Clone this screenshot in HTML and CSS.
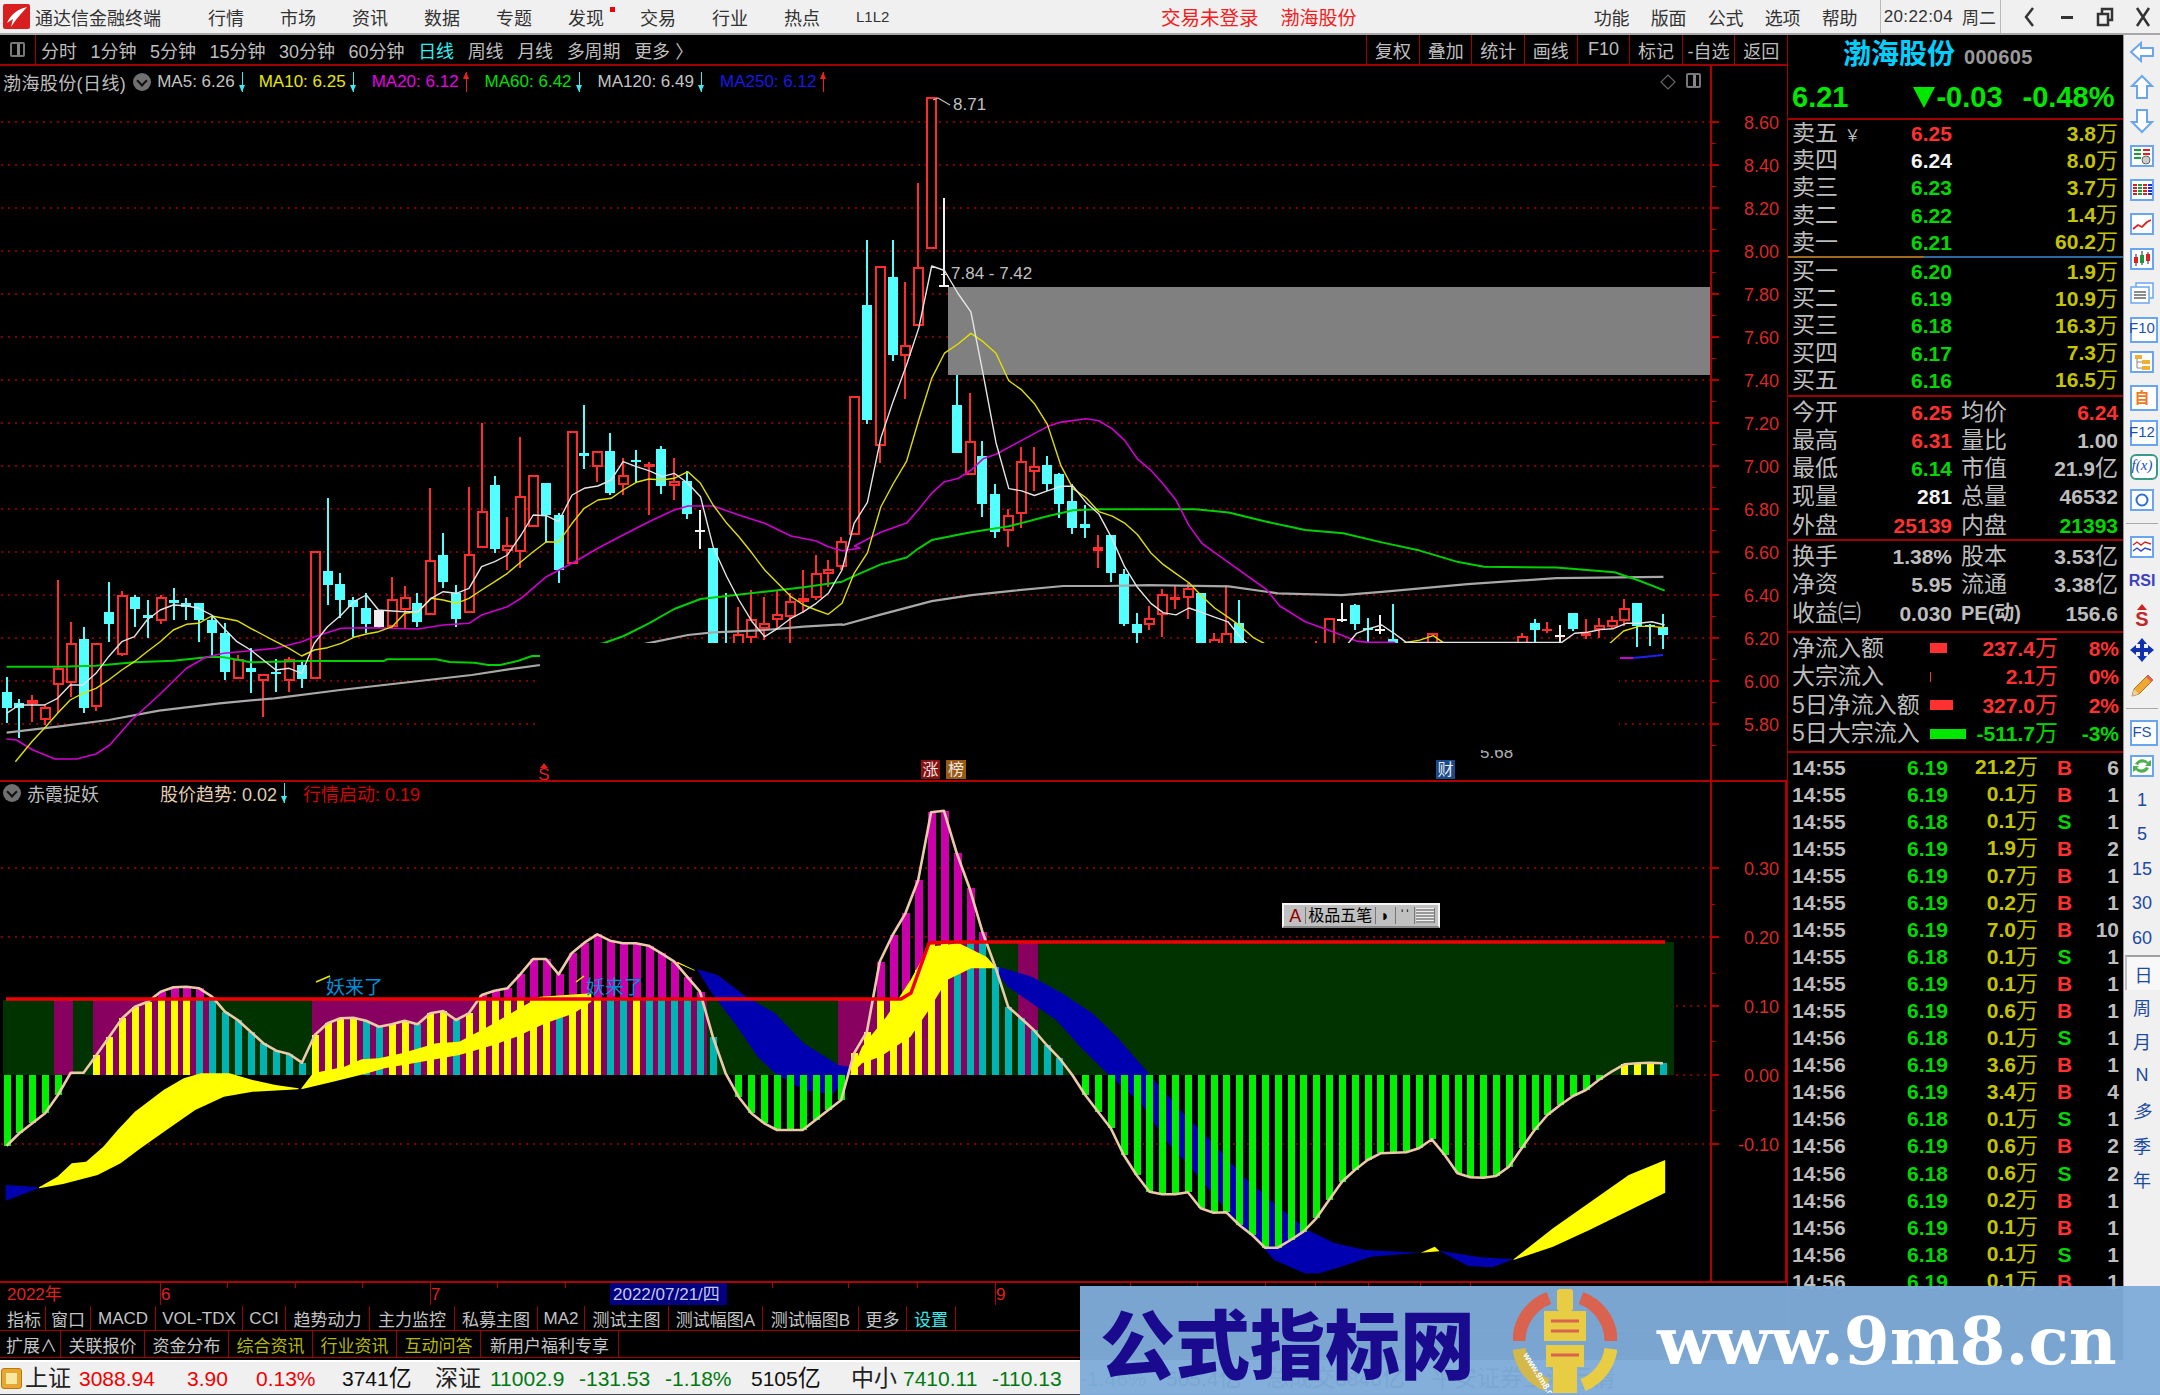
FILE: index.html
```html
<!DOCTYPE html>
<html lang="zh-CN">
<head>
    <meta charset="UTF-8">
    <title>通达信金融终端</title>
    <link rel="stylesheet" href="styles.css">
</head>
<body>
<div class="app">

    <!-- 标题栏 -->
    <header class="titlebar">
        <svg class="app-logo" viewBox="0 0 27 25"><rect width="27" height="25" rx="2" fill="#d81e1e"/><path d="M24 3 C15 5 8 10 4 19 L10 15 L8 23 C13 15 18 10 24 3Z" fill="#fff"/></svg>
        <span class="app-name">通达信金融终端</span>
        <nav class="menu">
            <span>行情</span><span>市场</span><span>资讯</span><span>数据</span><span>专题</span>
            <span class="has-dot">发现</span><span>交易</span><span>行业</span><span>热点</span><span class="latin">L1L2</span>
        </nav>
        <span class="login">交易未登录</span>
        <span class="login-stock">渤海股份</span>
        <nav class="func-menu"><span>功能</span><span>版面</span><span>公式</span><span>选项</span><span>帮助</span></nav>
        <div class="clock"><span class="clock-time">20:22:04</span><span>周二</span></div>
        <div class="win-btns">
            <svg viewBox="0 0 20 24"><path d="M14 3 L7 12 L14 21" fill="none" stroke="#333" stroke-width="2.5"/></svg>
            <svg viewBox="0 0 20 24"><rect x="4" y="11" width="12" height="3" fill="#333"/></svg>
            <svg viewBox="0 0 20 24"><rect x="7" y="4" width="10" height="11" fill="none" stroke="#333" stroke-width="2.5"/><rect x="3" y="9" width="10" height="11" fill="#f0f0f0" stroke="#333" stroke-width="2.5"/></svg>
            <svg viewBox="0 0 20 24"><path d="M4 3 L16 21 M16 3 L4 21" stroke="#333" stroke-width="2.5"/></svg>
        </div>
    </header>

    <div class="workspace">
        <!-- 左边: K线图 -->
        <main class="left">
            <div class="toolbar">
                <div class="toolbar-icon"><span></span></div>
                <div class="periods">
                    <span>分时</span><span>1分钟</span><span>5分钟</span><span>15分钟</span><span>30分钟</span><span>60分钟</span>
                    <span class="cyan">日线</span><span>周线</span><span>月线</span><span>多周期</span><span>更多 〉</span>
                </div>
                <div class="tools">
                    <span>复权</span><span>叠加</span><span>统计</span><span>画线</span><span>F10</span><span>标记</span><span>-自选</span><span>返回</span>
                </div>
            </div>

            <div class="chart">
                <svg id="chart" class="chart-svg" viewBox="0 66 1787 1240" width="1787" height="1240"></svg>

                <div class="legend legend-main">
                    <span class="legend-name">渤海股份(日线)</span>
                    <span class="chevron"></span>
                    <span class="ma c-gray">MA5: 6.26<b class="arrow down"></b></span>
                    <span class="ma c-yellow">MA10: 6.25<b class="arrow down"></b></span>
                    <span class="ma c-magenta">MA20: 6.12<b class="arrow up"></b></span>
                    <span class="ma c-green">MA60: 6.42<b class="arrow down"></b></span>
                    <span class="ma c-gray">MA120: 6.49<b class="arrow down"></b></span>
                    <span class="ma c-blue">MA250: 6.12<b class="arrow up"></b></span>
                </div>
                <div class="chart-corner">
                    <svg viewBox="0 0 16 16" width="16" height="16"><path d="M8 1 L15 8 L8 15 L1 8Z" fill="none" stroke="#666" stroke-width="1.2"/></svg>
                    <div class="mini-box"><span></span></div>
                </div>

                <div class="legend legend-sub">
                    <span class="chevron"></span>
                    <span class="legend-name sub-name">赤霞捉妖</span>
                    <span class="ma c-tan">股价趋势: 0.02<b class="arrow down"></b></span>
                    <span class="ma c-red">行情启动: 0.19</span>
                </div>

                <div class="ime">
                    <span class="ime-a">A</span><span class="ime-name">极品五笔</span><span class="ime-btn">◗</span><span class="ime-btn">ˈˈ</span><span class="ime-kbd"></span>
                </div>
            </div>

            <div class="tabs tabs-one">
                <span>指标</span><span>窗口</span><span>MACD</span><span>VOL-TDX</span><span>CCI</span><span>趋势动力</span><span>主力监控</span><span>私募主图</span><span>MA2</span><span>测试主图</span><span>测试幅图A</span><span>测试幅图B</span><span>更多</span><span class="cyan">设置</span>
            </div>
            <div class="tabs tabs-two">
                <span>扩展∧</span><span>关联报价</span><span>资金分布</span><span class="olive">综合资讯</span><span class="olive">行业资讯</span><span class="olive">互动问答</span><span>新用户福利专享</span>
            </div>
        </main>

        <!-- 右边: 盘口 -->
        <aside class="quote">
            <div class="quote-head">
                <div class="stock-line"><span class="stock-name">渤海股份</span><span class="stock-code">000605</span></div>
                <div class="price-line"><span>6.21</span><span class="price-change"><i class="tri"></i>-0.03</span><span>-0.48%</span></div>
            </div>

            <section class="book book-sell">
                <div class="book-row"><span class="lbl">卖五 <small>￥</small></span><span class="red">6.25</span><span class="vol">3.8<i>万</i></span></div>
                <div class="book-row"><span class="lbl">卖四</span><span class="white">6.24</span><span class="vol">8.0<i>万</i></span></div>
                <div class="book-row"><span class="lbl">卖三</span><span class="green">6.23</span><span class="vol">3.7<i>万</i></span></div>
                <div class="book-row"><span class="lbl">卖二</span><span class="green">6.22</span><span class="vol">1.4<i>万</i></span></div>
                <div class="book-row"><span class="lbl">卖一</span><span class="green">6.21</span><span class="vol">60.2<i>万</i></span></div>
            </section>
            <div class="book-split"></div>
            <section class="book book-buy">
                <div class="book-row"><span class="lbl">买一</span><span class="green">6.20</span><span class="vol">1.9<i>万</i></span></div>
                <div class="book-row"><span class="lbl">买二</span><span class="green">6.19</span><span class="vol">10.9<i>万</i></span></div>
                <div class="book-row"><span class="lbl">买三</span><span class="green">6.18</span><span class="vol">16.3<i>万</i></span></div>
                <div class="book-row"><span class="lbl">买四</span><span class="green">6.17</span><span class="vol">7.3<i>万</i></span></div>
                <div class="book-row"><span class="lbl">买五</span><span class="green">6.16</span><span class="vol">16.5<i>万</i></span></div>
            </section>

            <section class="info">
                <div class="info-row"><span class="lbl">今开</span><span class="red">6.25</span><span class="lbl2">均价</span><span class="red">6.24</span></div>
                <div class="info-row"><span class="lbl">最高</span><span class="red">6.31</span><span class="lbl2">量比</span><span class="gray">1.00</span></div>
                <div class="info-row"><span class="lbl">最低</span><span class="green">6.14</span><span class="lbl2">市值</span><span class="gray">21.9<i>亿</i></span></div>
                <div class="info-row"><span class="lbl">现量</span><span class="white">281</span><span class="lbl2">总量</span><span class="gray">46532</span></div>
                <div class="info-row"><span class="lbl">外盘</span><span class="red">25139</span><span class="lbl2">内盘</span><span class="green">21393</span></div>
            </section>
            <section class="info info-base">
                <div class="info-row"><span class="lbl">换手</span><span class="gray">1.38%</span><span class="lbl2">股本</span><span class="gray">3.53<i>亿</i></span></div>
                <div class="info-row"><span class="lbl">净资</span><span class="gray">5.95</span><span class="lbl2">流通</span><span class="gray">3.38<i>亿</i></span></div>
                <div class="info-row"><span class="lbl">收益㈢</span><span class="gray">0.030</span><span class="lbl2 pe">PE(动)</span><span class="gray">156.6</span></div>
            </section>

            <section class="flow">
                <div class="flow-row"><span class="lbl">净流入额</span><b class="bar bg-red" style="width:17px"></b><span class="red">237.4<i>万</i></span><span class="red">8%</span></div>
                <div class="flow-row"><span class="lbl">大宗流入</span><b class="bar bg-red" style="width:1px"></b><span class="red">2.1<i>万</i></span><span class="red">0%</span></div>
                <div class="flow-row"><span class="lbl">5日净流入额</span><b class="bar bg-red" style="width:23px"></b><span class="red">327.0<i>万</i></span><span class="red">2%</span></div>
                <div class="flow-row"><span class="lbl">5日大宗流入</span><b class="bar bg-green" style="width:36px"></b><span class="green">-511.7<i>万</i></span><span class="green">-3%</span></div>
            </section>

            <section class="ticks">
                <div class="tick"><span>14:55</span><span class="green">6.19</span><span class="vol">21.2<i>万</i></span><span class="red">B</span><span>6</span></div>
                <div class="tick"><span>14:55</span><span class="green">6.19</span><span class="vol">0.1<i>万</i></span><span class="red">B</span><span>1</span></div>
                <div class="tick"><span>14:55</span><span class="green">6.18</span><span class="vol">0.1<i>万</i></span><span class="green">S</span><span>1</span></div>
                <div class="tick"><span>14:55</span><span class="green">6.19</span><span class="vol">1.9<i>万</i></span><span class="red">B</span><span>2</span></div>
                <div class="tick"><span>14:55</span><span class="green">6.19</span><span class="vol">0.7<i>万</i></span><span class="red">B</span><span>1</span></div>
                <div class="tick"><span>14:55</span><span class="green">6.19</span><span class="vol">0.2<i>万</i></span><span class="red">B</span><span>1</span></div>
                <div class="tick"><span>14:55</span><span class="green">6.19</span><span class="vol">7.0<i>万</i></span><span class="red">B</span><span>10</span></div>
                <div class="tick"><span>14:55</span><span class="green">6.18</span><span class="vol">0.1<i>万</i></span><span class="green">S</span><span>1</span></div>
                <div class="tick"><span>14:55</span><span class="green">6.19</span><span class="vol">0.1<i>万</i></span><span class="red">B</span><span>1</span></div>
                <div class="tick"><span>14:55</span><span class="green">6.19</span><span class="vol">0.6<i>万</i></span><span class="red">B</span><span>1</span></div>
                <div class="tick"><span>14:56</span><span class="green">6.18</span><span class="vol">0.1<i>万</i></span><span class="green">S</span><span>1</span></div>
                <div class="tick"><span>14:56</span><span class="green">6.19</span><span class="vol">3.6<i>万</i></span><span class="red">B</span><span>1</span></div>
                <div class="tick"><span>14:56</span><span class="green">6.19</span><span class="vol">3.4<i>万</i></span><span class="red">B</span><span>4</span></div>
                <div class="tick"><span>14:56</span><span class="green">6.18</span><span class="vol">0.1<i>万</i></span><span class="green">S</span><span>1</span></div>
                <div class="tick"><span>14:56</span><span class="green">6.19</span><span class="vol">0.6<i>万</i></span><span class="red">B</span><span>2</span></div>
                <div class="tick"><span>14:56</span><span class="green">6.18</span><span class="vol">0.6<i>万</i></span><span class="green">S</span><span>2</span></div>
                <div class="tick"><span>14:56</span><span class="green">6.19</span><span class="vol">0.2<i>万</i></span><span class="red">B</span><span>1</span></div>
                <div class="tick"><span>14:56</span><span class="green">6.19</span><span class="vol">0.1<i>万</i></span><span class="red">B</span><span>1</span></div>
                <div class="tick"><span>14:56</span><span class="green">6.18</span><span class="vol">0.1<i>万</i></span><span class="green">S</span><span>1</span></div>
                <div class="tick"><span>14:56</span><span class="green">6.19</span><span class="vol">0.1<i>万</i></span><span class="red">B</span><span>1</span></div>
            </section>
        </aside>

        <!-- 侧边工具条 -->
        <nav class="sidebar">
            <div class="side"><svg viewBox="0 0 26 26"><path d="M2 13 L12 4 V9 H24 V17 H12 V22Z" fill="#fff" stroke="#6aa6f0" stroke-width="2"/></svg></div>
            <div class="side"><svg viewBox="0 0 26 26"><path d="M13 2 L23 12 H18 V24 H8 V12 H3Z" fill="#fff" stroke="#6aa6f0" stroke-width="2"/></svg></div>
            <div class="side"><svg viewBox="0 0 26 26"><path d="M13 24 L23 14 H18 V2 H8 V14 H3Z" fill="#fff" stroke="#6aa6f0" stroke-width="2"/></svg></div>
            <div class="side"><svg viewBox="0 0 26 26"><rect x="2" y="3" width="22" height="20" fill="#fff" stroke="#6aa6f0" stroke-width="2"/><path d="M5 7 H12 M5 11 H12 M5 15 H12" stroke="#1a9a3a" stroke-width="2"/><path d="M14 7 H21 M14 11 H21" stroke="#d82020" stroke-width="2"/><circle cx="17" cy="17" r="4" fill="#ccc" stroke="#666"/></svg></div>
            <div class="side"><svg viewBox="0 0 26 26"><rect x="2" y="3" width="22" height="20" fill="#fff" stroke="#6aa6f0" stroke-width="2"/><path d="M6 7 V19" stroke="#d82020" stroke-width="4" stroke-dasharray="2 1"/><path d="M11 7 V19" stroke="#1a9a3a" stroke-width="4" stroke-dasharray="2 1"/><path d="M16 7 V19" stroke="#d82020" stroke-width="4" stroke-dasharray="2 1"/><path d="M21 7 V19" stroke="#2030d0" stroke-width="4" stroke-dasharray="2 1"/></svg></div>
            <div class="side"><svg viewBox="0 0 26 26"><rect x="2" y="3" width="22" height="20" fill="#fff" stroke="#6aa6f0" stroke-width="2"/><path d="M4 18 L9 14 L13 16 L18 11 L22 9" fill="none" stroke="#e02020" stroke-width="1.8"/></svg></div>
            <div class="side"><svg viewBox="0 0 26 26"><rect x="2" y="3" width="22" height="20" fill="#fff" stroke="#6aa6f0" stroke-width="2"/><path d="M7 8 V20 M13 5 V19 M19 6 V18" stroke="#222"/><rect x="5" y="11" width="4" height="6" fill="#e02020"/><rect x="11" y="9" width="4" height="8" fill="#1a9a3a"/><rect x="17" y="8" width="4" height="7" fill="#e02020"/></svg></div>
            <div class="side"><svg viewBox="0 0 26 26"><rect x="7" y="3" width="17" height="15" fill="#fff" stroke="#6aa6f0" stroke-width="1.5"/><rect x="2" y="7" width="18" height="16" fill="#fff" stroke="#6aa6f0" stroke-width="1.5"/><path d="M5 12 H17 M5 15 H17 M5 18 H17" stroke="#666" stroke-width="1.6"/></svg></div>
            <div class="side boxed blue-txt">F10</div>
            <div class="side"><svg viewBox="0 0 26 26"><rect x="2" y="3" width="22" height="20" fill="#fff" stroke="#6aa6f0" stroke-width="2"/><rect x="6" y="6" width="7" height="4" fill="#f0b030"/><rect x="13" y="11" width="8" height="4" fill="#f0b030"/><rect x="13" y="17" width="8" height="4" fill="#f0b030"/><path d="M8 10 V19 H13 M8 13 H13" fill="none" stroke="#888"/></svg></div>
            <div class="side boxed orange-txt">自</div>
            <div class="side boxed blue-txt">F12</div>
            <div class="side boxed round blue-txt fx">f(x)</div>
            <div class="side"><svg viewBox="0 0 26 26"><rect x="2" y="3" width="22" height="20" fill="#fff" stroke="#6aa6f0" stroke-width="2"/><circle cx="13" cy="13" r="5.5" fill="none" stroke="#2a70d0" stroke-width="2"/></svg></div>
            <div class="side-sep"></div>
            <div class="side"><svg viewBox="0 0 26 26"><rect x="2" y="3" width="22" height="20" fill="#fff" stroke="#6aa6f0" stroke-width="2"/><path d="M4 11 L8 8 L12 11 L16 8 L22 10" fill="none" stroke="#e02020" stroke-width="1.4"/><path d="M4 17 L8 14 L12 17 L16 14 L22 16" fill="none" stroke="#3040d0" stroke-width="1.4"/></svg></div>
            <div class="side rsi">RSI</div>
            <div class="side"><svg viewBox="0 0 26 26"><path d="M13 1 L18 7 H8Z" fill="#d02020"/><text x="13" y="23" text-anchor="middle" class="side-s">S</text></svg></div>
            <div class="side"><svg viewBox="0 0 26 26"><path d="M13 1 L18 7 H15 V11 H19 V8 L25 13 L19 18 V15 H15 V19 H18 L13 25 L8 19 H11 V15 H7 V18 L1 13 L7 8 V11 H11 V7 H8Z" fill="#1030b0"/></svg></div>
            <div class="side"><svg viewBox="0 0 26 26"><path d="M3 24 L5 17 L19 3 L24 8 L10 22Z" fill="#f0a830" stroke="#a07020"/><path d="M19 3 L24 8 L22 10 L17 5Z" fill="#e06060"/><path d="M3 24 L5 17 L10 22Z" fill="#e8d0a0"/></svg></div>
            <div class="side-sep"></div>
            <div class="side boxed blue-txt">FS</div>
            <div class="side"><svg viewBox="0 0 26 26"><rect x="2" y="3" width="22" height="20" fill="#fff" stroke="#6aa6f0" stroke-width="2"/><path d="M6 11 C9 5 16 5 19 9 L22 7 V13 H16 L18 11 C15 9 11 9 9 12Z" fill="#50b050"/><path d="M20 15 C17 21 10 21 7 17 L4 19 V13 H10 L8 15 C11 17 15 17 17 14Z" fill="#50b050"/></svg></div>
            <div class="side num">1</div>
            <div class="side num">5</div>
            <div class="side num">15</div>
            <div class="side num">30</div>
            <div class="side num">60</div>
            <div class="side num active">日</div>
            <div class="side num">周</div>
            <div class="side num">月</div>
            <div class="side num">N</div>
            <div class="side num ital">多</div>
            <div class="side num">季</div>
            <div class="side num">年</div>
        </nav>
    </div>

    <!-- 状态栏 -->
    <footer class="status">
        <span class="status-icon"><b></b></span>
        <span class="idx">上证</span><span class="t-red">3088.94</span><span class="t-red">3.90</span><span class="t-red">0.13%</span><span>3741<i>亿</i></span>
        <span class="idx">深证</span><span class="t-green">11002.9</span><span class="t-green">-131.53</span><span class="t-green">-1.18%</span><span>5105<i>亿</i></span>
        <span class="idx">中小</span><span class="t-green">7410.11</span><span class="t-green">-110.13</span><span class="t-green">-1.46%</span><span>505.4<i>亿</i></span>
        <span class="idx">总成交</span><span>8846<i>亿</i></span><span class="idx">平安证券上海行情</span>
    </footer>

    <!-- 水印 -->
    <div class="watermark">
        <span class="wm-title">公式指标网</span>
        <svg class="wm-logo" viewBox="0 0 104 104">
            <path d="M6 52 A46 46 0 0 1 36 9" fill="none" stroke="#d9634e" stroke-width="13"/>
            <path d="M68 9 A46 46 0 0 1 98 52" fill="none" stroke="#d9634e" stroke-width="13"/>
            <path d="M98 60 A46 46 0 0 1 70 96" fill="none" stroke="#e8cc44" stroke-width="13"/>
            <path d="M6 60 A46 46 0 0 0 34 96" fill="none" stroke="#d4b84a" stroke-width="13"/>
            <rect x="44" y="0" width="16" height="22" rx="3" fill="#e8cc44"/>
            <rect x="31" y="22" width="42" height="30" fill="#e8cc44"/>
            <rect x="33" y="56" width="38" height="22" fill="#e8cc44"/>
            <rect x="40" y="78" width="24" height="26" fill="#e8cc44"/>
            <path d="M38 32 H66 M38 42 H66 M38 66 H66" stroke="#d9634e" stroke-width="3"/>
            <text class="wm-mini" transform="translate(10 66) rotate(58)">www.9m8.cn</text>
        </svg>
        <span class="wm-url">www.9m8.cn</span>
    </div>
</div>
<script src="chart.js"></script>
</body>
</html>
```

FILE: styles.css
```css
* {
    box-sizing: border-box;
}

body {
    margin: 0;
    background-color: #000;
    font-family: "Liberation Sans", "Noto Sans CJK SC", sans-serif;
}

i {
    font-style: normal;
}

.app {
    position: relative;
    width: 2160px;
    height: 1395px;
    overflow: hidden;
    display: flex;
    flex-direction: column;
}

/* 标题栏 */
.titlebar {
    height: 35px;
    flex: none;
    display: flex;
    align-items: center;
    padding-left: 3px;
    padding-right: 7px;
    background-color: #f0f0f0;
    border-bottom: 2px solid #a8a8a8;
    color: #333;
    font-size: 18px;
}

.app-logo {
    width: 27px;
    height: 25px;
}

.app-name {
    margin-left: 5px;
}

.menu {
    display: flex;
    align-items: center;
    gap: 36px;
    margin-left: 47px;
}

.menu .latin {
    font-size: 15px;
}

.has-dot {
    position: relative;
}

.has-dot::after {
    content: "";
    position: absolute;
    right: -11px;
    top: 3px;
    width: 5px;
    height: 5px;
    background-color: #f00000;
}

.login {
    margin-left: auto;
    color: #f02020;
    font-size: 19.5px;
}

.login-stock {
    margin-left: 22px;
    margin-right: 237px;
    color: #f02020;
    font-size: 19px;
}

.func-menu {
    display: flex;
    gap: 21px;
}

.clock {
    display: flex;
    gap: 9px;
    height: 33px;
    align-items: center;
    margin-left: 22px;
    padding: 0 4px 0 3px;
    border-left: 1px solid #b8b8b8;
    border-right: 1px solid #b8b8b8;
    font-size: 17px;
}

.clock-time {
    letter-spacing: 0.4px;
}

.win-btns {
    display: flex;
    gap: 18px;
    margin-left: 18px;
}

.win-btns svg {
    width: 20px;
    height: 24px;
}

/* 主体 */
.workspace {
    flex: none;
    height: 1325px;
    display: flex;
}

.left {
    width: 1787px;
    flex: none;
    background-color: #000;
}

.toolbar {
    height: 31px;
    display: flex;
    align-items: center;
    border-bottom: 2px solid #a00000;
    color: #bdbdbd;
    font-size: 18px;
}

.toolbar-icon {
    width: 36px;
    height: 29px;
    display: flex;
    align-items: center;
    justify-content: center;
    border-right: 1px solid #a00000;
}

.toolbar-icon span,
.mini-box span {
    display: block;
    width: 15px;
    height: 15px;
    border: 2px solid #777;
    border-radius: 2px;
    background: linear-gradient(90deg, #000 45%, #888 45%, #888 75%, #000 75%);
}

.periods {
    display: flex;
    gap: 13.5px;
    margin-left: 5px;
    white-space: nowrap;
}

.tools {
    margin-left: auto;
    display: flex;
    height: 29px;
}

.tools span {
    width: 52.6px;
    display: flex;
    align-items: center;
    justify-content: center;
    border-left: 1px solid #a00000;
}

.cyan {
    color: #30f0f0;
}

.olive {
    color: #b8b800;
}

/* 图表 */
.chart {
    position: relative;
    height: 1240px;
}

.chart-svg {
    display: block;
}

.chart-svg text {
    font-family: "Liberation Sans", "Noto Sans CJK SC", sans-serif;
}

.legend {
    position: absolute;
    left: 3px;
    display: flex;
    align-items: center;
    font-size: 17px;
    white-space: nowrap;
}

.legend-main {
    top: 3px;
}

.legend-sub {
    top: 714px;
    font-size: 18px;
}

.legend-name {
    color: #bdbdbd;
    font-size: 18px;
    letter-spacing: 0.4px;
}

.sub-name {
    margin-left: 6px;
    margin-right: 61px;
    letter-spacing: 0;
}

.chevron {
    width: 18px;
    height: 18px;
    border-radius: 50%;
    background-color: #707070;
    position: relative;
}

.legend-main .chevron {
    margin-left: 7px;
    margin-right: 6px;
}

.chevron::after {
    content: "";
    position: absolute;
    left: 5px;
    top: 4px;
    width: 6px;
    height: 6px;
    border-right: 2px solid #111;
    border-bottom: 2px solid #111;
    transform: rotate(45deg);
}

.ma {
    display: flex;
    align-items: center;
    gap: 4px;
    margin-right: 15px;
}

.legend-main .ma:nth-child(3) {
    margin-right: 13px;
}

.c-gray { color: #c4c4c4; }
.c-yellow { color: #e8e800; }
.c-magenta { color: #e800e8; }
.c-green { color: #00e000; }
.c-blue { color: #1818e8; }
.c-tan { color: #e2cdb0; }
.c-red { color: #d80000; }

.arrow {
    position: relative;
    display: block;
    width: 7px;
    height: 20px;
}

.arrow::before {
    content: "";
    position: absolute;
    left: 3px;
    top: 0;
    width: 1px;
    height: 20px;
    background-color: currentColor;
}

.arrow::after {
    content: "";
    position: absolute;
    left: 0;
    border-left: 3.5px solid transparent;
    border-right: 3.5px solid transparent;
}

.arrow.down {
    color: #40e8f0;
}

.arrow.down::after {
    bottom: 0;
    border-top: 7px solid #40e8f0;
}

.arrow.up {
    color: #f02020;
}

.arrow.up::after {
    top: 0;
    border-bottom: 7px solid #f02020;
}

.chart-corner {
    position: absolute;
    left: 1660px;
    top: 7px;
    display: flex;
    align-items: center;
    gap: 10px;
}

.mini-box {
    width: 17px;
    height: 17px;
}

.ime {
    position: absolute;
    left: 1282px;
    top: 837px;
    width: 158px;
    height: 25px;
    display: flex;
    align-items: stretch;
    padding: 2px;
    background-color: #c0c0c0;
    border: 2px solid #f4f4f4;
    border-bottom-color: #888;
    font-size: 16px;
    color: #000;
}

.ime span {
    display: flex;
    align-items: center;
    justify-content: center;
    border-right: 1px solid #777;
    line-height: 1;
}

.ime-a { width: 20px; color: #900000; font-size: 18px; }
.ime-name { width: 71px; }
.ime-btn { width: 20px; }
.ime-kbd {
    width: 19px;
    margin: 1px;
    background: repeating-linear-gradient(0deg, #999 0 2px, #eee 2px 3px);
}

/* 底部指标页签 */
.tabs {
    display: grid;
    align-items: stretch;
    justify-content: start;
    padding-left: 3px;
    border-bottom: 1px solid #a00000;
    color: #c4c4c4;
    font-size: 17px;
    white-space: nowrap;
}

.tabs span {
    display: flex;
    align-items: center;
    justify-content: center;
    border-right: 1px solid #a00000;
}

.tabs-one {
    height: 25px;
    grid-template-columns: 43px 45px 65px 87px 43px 84px 85px 83px 47px 84px 94px 96px 48px 49px;
}

.tabs-two {
    height: 27px;
    grid-template-columns: 58px 84px 84px 84px 84px 84px 138px;
}

/* 盘口 */
.quote {
    width: 336px;
    flex: none;
    padding-left: 4px;
    padding-right: 5px;
    background-color: #000;
    border-left: 1px solid #a00000;
    color: #bdbdbd;
    font-size: 23px;
    line-height: 1;
    overflow: hidden;
    font-weight: bold;
}

.quote i,
.quote .lbl,
.quote .lbl2 {
    font-weight: normal;
}

.quote-head {
    height: 85px;
    margin: 0 -5px 0 -4px;
    padding: 0 5px 0 4px;
    border-bottom: 2px solid #a00000;
    font-size: 0;
}

.stock-line {
    display: flex;
    align-items: center;
    height: 40px;
    padding-left: 51px;
}

.stock-name {
    color: #00d0ff;
    font-size: 28px;
    letter-spacing: 0;
}

.stock-code {
    margin-left: 9px;
    margin-top: 4px;
    color: #9a9a9a;
    font-size: 20px;
    letter-spacing: 0.3px;
}

.price-line {
    display: flex;
    align-items: center;
    height: 44px;
    color: #00e800;
    font-size: 29px;
}

.price-change {
    display: flex;
    align-items: center;
    margin-left: 65px;
    margin-right: 20px;
    font-size: 29px;
}

.tri {
    width: 0;
    height: 0;
    border-left: 11px solid transparent;
    border-right: 11px solid transparent;
    border-top: 21px solid #00e800;
    margin-right: 1px;
}

.book-row {
    height: 27.2px;
    display: grid;
    grid-template-columns: 119px auto 1fr;
    align-items: center;
    font-size: 21px;
}

.book-row .lbl,
.info-row .lbl,
.info-row .lbl2,
.flow-row .lbl {
    color: #bdbdbd;
    font-size: 23px;
}

.book-row small {
    font-size: 16px;
}

.book-row .vol,
.tick .vol {
    justify-self: end;
    color: #c4c400;
}

.vol i {
    font-size: 22px;
}

.book-split {
    height: 2px;
    margin: 0 -5px 0 -4px;
    background: linear-gradient(90deg, #a06a20 0 136px, #2a6aa0 136px);
}

.book-buy .book-row:last-child {
    margin-bottom: 1px;
}

.info,
.flow,
.ticks {
    margin: 0 -5px 0 -4px;
    padding: 1px 5px 0 4px;
    border-top: 2px solid #a00000;
}

.info-row {
    height: 28.3px;
    display: grid;
    grid-template-columns: 60px 100px 1fr auto;
    align-items: center;
    font-size: 21px;
    white-space: nowrap;
}

.info-row > :nth-child(2) {
    justify-self: end;
}

.info-row .lbl2 {
    padding-left: 9px;
}

.info-row .lbl2.pe {
    font-size: 20px;
    font-weight: bold;
}

.info-row i {
    font-size: 23px;
}

.info-base {
    padding-bottom: 4px;
}

.flow {
    padding-bottom: 3px;
}

.flow-row {
    height: 28.4px;
    display: grid;
    grid-template-columns: 138px 40px 88px 61px;
    align-items: center;
    font-size: 21px;
    white-space: nowrap;
}

.flow-row > :nth-child(n+3) {
    justify-self: end;
}

.flow-row i {
    font-size: 23px;
}

.bar {
    display: block;
    height: 10px;
}

.bg-red { background-color: #ff3030; }
.bg-green { background-color: #00e800; }

.tick {
    height: 27.05px;
    display: grid;
    grid-template-columns: 115px 64px 67px 53px 28px;
    align-items: center;
    font-size: 21px;
}

.tick > :nth-child(4) {
    justify-self: center;
}

.tick > :last-child {
    justify-self: end;
}

.red { color: #ff3030; }
.green { color: #00d800; }
.white { color: #f4f4f4; }
.gray { color: #bdbdbd; }

/* 侧边栏 */
.sidebar {
    width: 37px;
    flex: none;
    background-color: #f0f0f0;
    border-left: 1px solid #9a9a9a;
}

.side {
    height: 34.45px;
    display: flex;
    align-items: center;
    justify-content: center;
}

.side svg {
    width: 26px;
    height: 26px;
}

.side-s {
    font-family: "Liberation Sans", sans-serif;
    font-size: 20px;
    font-weight: bold;
    fill: #c02828;
}

.side-sep {
    height: 12.5px;
    padding-top: 6px;
}

.side-sep::before {
    content: "";
    display: block;
    height: 1px;
    margin: 0 2px;
    background-color: #aaa;
}

.boxed {
    font-size: 15px;
}

.blue-txt,
.orange-txt {
    position: relative;
    z-index: 0;
}

.blue-txt { color: #1c50b8; }
.orange-txt { color: #f07820; font-weight: bold; }

.boxed::after {
    content: "";
    position: absolute;
    left: 6px;
    top: 6px;
    width: 24px;
    height: 22px;
    border: 2px solid #6aa6f0;
    background-color: #fff;
    z-index: -1;
}

.round::after {
    border-color: #3a9a8a;
    border-radius: 6px;
}

.fx {
    font-family: "Liberation Serif", serif;
    font-style: italic;
}

.rsi {
    color: #3c40c0;
    font-size: 16px;
    font-weight: bold;
}

.num {
    color: #1c4aa0;
    font-size: 18px;
}

.ital {
    font-style: italic;
}

.active {
    margin-left: 1px;
    background-color: #f8f8f8;
    border-top: 2px solid #a0a0a0;
    border-left: 2px solid #c0c0c0;
}

/* 状态栏 */
.status {
    flex: none;
    height: 35px;
    display: grid;
    grid-template-columns: 25px 54px 108px 69px 86px 93px 55px 89px 86px 86px 100px 52px 89px 88px 86px 100px 69px 96px auto;
    align-items: center;
    background-color: #f0f0f0;
    border-top: 2px solid #fff;
    border-bottom: 1px solid #445;
    color: #111;
    font-size: 21px;
    line-height: 1;
    white-space: nowrap;
}

.status i,
.idx {
    font-size: 23px;
}

.status .idx {
    color: #222;
}

.status-icon {
    width: 21px;
    height: 21px;
    margin-left: 1px;
    padding: 4px;
    border-radius: 3px;
    background-color: #e8a830;
    border: 1px solid #b87810;
}

.status-icon b {
    display: block;
    height: 100%;
    background-color: #f8e8a0;
}

.t-red { color: #f00000; }
.t-green { color: #007a10; }

/* 水印 */
.watermark {
    position: absolute;
    left: 1080px;
    top: 1286px;
    width: 1080px;
    height: 109px;
    display: flex;
    align-items: center;
    background-color: rgba(127, 172, 218, 0.96);
}

.wm-title {
    margin-left: 20px;
    color: #1a0a8e;
    font-family: "Noto Sans CJK SC", sans-serif;
    font-size: 75px;
    font-weight: 900;
    line-height: 1;
    white-space: nowrap;
}

.wm-logo {
    width: 104px;
    height: 104px;
    margin-left: 38px;
}

.wm-mini {
    fill: #fff;
    font-family: "Liberation Sans", sans-serif;
    font-size: 9px;
    font-weight: bold;
}

.wm-url {
    margin-left: 40px;
    color: #fff;
    font-family: "DejaVu Serif", serif;
    font-size: 66px;
    font-weight: bold;
    line-height: 1;
    white-space: nowrap;
}
```

FILE: chart.js
```js
// K线和指标都从截图里量的点画出来
const svg = document.getElementById('chart');
const parts = [];

const z7 = ([x, y]) => [x / 1.823, y / 3 + 380];
const z8 = ([x, y]) => [x / 1.633 + 800, y / 2.178 + 80];
const z9 = ([x, y]) => [x / 1.742, y / 3 + 780];
const z10 = ([x, y]) => [x / 1.65 + 850, y / 3 + 780];
const candleX = i => 6.6 + 12.84 * i;
const toPts = pts => pts.map(p => p[0].toFixed(1) + ',' + p[1].toFixed(1)).join(' ');

function polyline(pts, color, width) {
    parts.push(`<polyline points="${toPts(pts)}" fill="none" stroke="${color}" stroke-width="${width}" stroke-linejoin="round"/>`);
}

function band(upper, lower, color) {
    parts.push(`<polygon points="${toPts(upper.concat(lower.slice().reverse()))}" fill="${color}"/>`);
}

function rect(x, y, w, h, fill) {
    parts.push(`<rect x="${x}" y="${y}" width="${w}" height="${h}" fill="${fill}" shape-rendering="crispEdges"/>`);
}

function text(x, y, str, color, size, anchor) {
    parts.push(`<text x="${x}" y="${y}" fill="${color}" font-size="${size}" text-anchor="${anchor || 'start'}">${str}</text>`);
}

function dotted(x1, x2, y) {
    parts.push(`<line x1="${x1}" x2="${x2}" y1="${y}" y2="${y}" stroke="#a80000" stroke-width="1.5" stroke-dasharray="2 5"/>`);
}

/* ---------- 主图 ---------- */
const priceY = p => 122 + 215 * (8.6 - p);
for (let p = 8.6; p > 5.7; p -= 0.2) {
    dotted(1, 1710, priceY(p));
}

// [类型, 上影, 实体顶, 实体底, 下影]  r红 c青 w白
const candles7 = [
    ['c',890,935,985,1030],['c',958,968,985,1075],['r',945,960,973,1025],['r',975,982,1020,1035],['r',600,865,915,1000],
    ['r',725,788,910,950],['c',742,778,985,998],['r',788,788,982,992],['c',606,697,733,785],['r',632,645,825,828],
    ['c',645,652,687,740],['c',660,706,714,775],['r',645,652,722,733],['c',625,660,668,720],['c',655,670,682,720],
    ['c',670,670,720,785],['c',710,720,760,830],['c',730,760,875,900],['r',825,837,897,897],['c',805,863,877,938],
    ['r',882,882,902,1010],['c',838,876,880,935],['r',830,838,902,935],['c',845,855,898,925],['r',513,513,897,897],
    ['c',355,572,615,675],['c',580,612,660,715],['c',650,660,682,770],['c',640,683,733,760],['w',690,690,742,745],
    ['r',590,657,740,745],['r',617,652,690,745],['c',640,670,727,742],['r',323,540,705,705],['c',458,526,606,625],
    ['c',615,640,718,742],['r',320,522,700,700],['r',128,392,505,505],['c',288,315,507,520],['r',410,495,512,570],
    ['r',170,347,515,565],['r',285,285,440,440],['c',310,310,404,490],['c',400,404,570,610],['r',152,152,552,552],
    ['c',75,220,228,268],['r',212,212,260,305],['c',160,212,340,345],['r',235,285,316,345],['c',210,240,242,305],
    ['r',245,252,260,405],['c',197,207,318,342],['r',233,303,317,360],['c',272,302,403,418],['w',390,450,453,507],
    ['c',503,503,900,900],['c',640,900,900,900],['r',680,762,900,900],['r',630,716,775,795],['r',650,730,748,780],
    ['r',630,703,720,745],['r',640,662,710,790],['r',570,653,665,700],['r',525,580,655,660],['r',540,567,582,620],
    ['r',470,482,560,570],['r',48,48,465,465]
];
const candles8 = {
    67:['c',348,490,740,750],68:['r',405,405,798,835],69:['c',348,430,600,612],70:['r',440,578,602,695],71:['r',225,408,535,535],
    72:['r',38,38,367,367],73:['w',258,446,449,449],74:['c',640,708,812,812],75:['r',682,787,860,860],76:['c',787,820,923,952],
    77:['c',880,902,985,998],78:['r',935,948,982,1018],79:['r',800,830,945,975],80:['r',800,840,853,895],81:['c',820,838,880,895],
    82:['c',857,858,923,955],83:['c',880,918,975,988],84:['c',925,967,975,998],85:['f',990,1018,1025,1063],86:['c',990,992,1073,1093],
    87:['c',1065,1077,1185,1190],88:['c',1160,1185,1204,1228],89:['r',1145,1172,1188,1198],90:['r',1108,1120,1165,1213],91:['f',1100,1125,1132,1152],
    92:['r',1095,1107,1128,1175],93:['c',1118,1118,1300,1300],94:['r',1205,1218,1300,1300],95:['r',1100,1205,1300,1300],96:['c',1132,1182,1300,1300],
    102:['r',1222,1240,1300,1300],103:['r',1172,1172,1300,1300],104:['w',1140,1175,1178,1180],105:['c',1142,1143,1185,1197],106:['c',1172,1193,1198,1225],
    107:['w',1165,1195,1198,1207],108:['c',1142,1218,1300,1300],111:['r',1205,1205,1300,1300],118:['r',1205,1210,1300,1300],119:['c',1175,1183,1198,1225],
    120:['f',1180,1196,1200,1205],121:['w',1187,1209,1212,1225],122:['c',1160,1160,1195,1200],123:['f',1175,1205,1211,1217],124:['r',1172,1186,1197,1215],
    125:['r',1168,1177,1192,1195],126:['r',1130,1150,1178,1190],127:['c',1140,1140,1190,1235],128:['c',1185,1186,1188,1233],129:['c',1162,1192,1208,1240]
};

function candle(i, type, wt, bt, bb, wb) {
    const x = Math.round(candleX(i));
    const color = type === 'c' ? '#54ffff' : type === 'w' ? '#f0f0f0' : '#ff2c2c';
    if (wt < bt) rect(x - 1, wt, 2, bt - wt, color);
    if (wb > bb) rect(x - 1, bb, 2, wb - bb, color);
    if (type === 'r') {
        parts.push(`<rect x="${x - 4.5}" y="${bt + 1}" width="9" height="${Math.max(bb - bt - 2, 1)}" fill="#000" stroke="${color}" stroke-width="2" shape-rendering="crispEdges"/>`);
    } else {
        rect(x - 5, bt, 10, Math.max(bb - bt, 2), color);
    }
}

candles7.forEach((c, i) => {
    candle(i, c[0], c[1] / 3 + 380, c[2] / 3 + 380, c[3] / 3 + 380, c[4] / 3 + 380);
});
Object.keys(candles8).forEach(k => {
    const c = candles8[k];
    const y = v => v / 2.178 + 80;
    candle(+k, c[0], y(c[1]), y(c[2]), y(c[3]), y(c[4]));
});

// 灰色缺口
rect(948, 287, 762, 88, '#808080');

const ma5 = [[12,1000],[35,975],[58,975],[81,975],[105,955],[128,915],[151,915],[175,880],[198,830],[222,785],[245,770],[268,720],[292,690],[316,675],[340,677],[362,685],[386,705],[408,745],[432,785],[457,810],[480,840],[503,870],[527,865],[550,880],[573,790],[597,740],[622,705],[645,665],[668,645],[690,690],[715,693],[738,695],[762,695],[786,655],[808,635],[832,640],[855,625],[878,560],[902,545],[925,525],[950,465],[972,405],[996,407],[1018,425],[1043,345],[1065,325],[1090,318],[1114,300],[1136,245],[1160,260],[1183,272],[1207,290],[1229,280],[1254,310],[1277,350],[1300,500],[1325,590],[1347,660],[1371,725],[1394,770],[1418,745],[1442,715],[1465,695],[1488,670],[1510,640],[1535,570],[1557,430]].map(z7)
    .concat([[110,920],[132,780],[152,700],[174,620],[194,540],[215,405],[236,415],[258,465],[279,505],[299,640],[320,790],[341,890],[362,895],[383,905],[404,895],[426,885],[446,885],[467,920],[488,945],[510,1000],[530,1060],[551,1105],[573,1140],[593,1160],[614,1165],[635,1150],[657,1160],[677,1170],[699,1180],[720,1215],[741,1240],[867,1240],[887,1240],[909,1205],[929,1195],[950,1187],[970,1205],[990,1225],[1244,1225],[1265,1205],[1286,1203],[1307,1197],[1328,1195],[1350,1183],[1370,1183],[1391,1180],[1412,1187]].map(z8));
const ma10 = [[28,1145],[58,1085],[81,1045],[105,1000],[128,960],[151,940],[175,925],[198,900],[222,870],[245,845],[268,815],[292,785],[316,750],[340,733],[362,730],[386,708],[408,715],[432,722],[457,745],[480,765],[503,785],[527,805],[550,828],[573,810],[597,803],[622,790],[645,772],[668,762],[690,755],[715,740],[738,700],[762,695],[786,655],[808,660],[832,670],[855,655],[878,630],[902,605],[925,580],[950,545],[972,515],[996,485],[1018,487],[1043,430],[1065,385],[1090,360],[1114,355],[1136,330],[1160,307],[1183,297],[1207,300],[1229,295],[1254,275],[1277,310],[1300,375],[1325,430],[1347,470],[1371,520],[1394,570],[1418,610],[1442,650],[1465,675],[1488,690],[1510,703],[1535,670],[1557,580]].map(z7)
    .concat([[110,1030],[132,930],[152,880],[174,830],[194,740],[215,650],[236,595],[258,575],[279,552],[299,570],[320,595],[341,655],[362,675],[383,705],[404,750],[426,840],[446,890],[467,910],[488,940],[510,950],[530,965],[551,990],[573,1030],[593,1055],[614,1075],[635,1095],[657,1125],[677,1150],[699,1170],[720,1190],[741,1215],[762,1230],[800,1260],[960,1240],[990,1225],[1012,1220],[1034,1210],[1050,1225],[1060,1260],[1300,1260],[1320,1230],[1345,1200],[1370,1190],[1391,1190],[1412,1193]].map(z8));
const ma20 = [[12,1077],[30,1080],[60,1110],[100,1137],[140,1137],[175,1122],[200,1095],[240,1020],[290,945],[340,865],[375,832],[408,820],[457,812],[503,805],[550,785],[573,770],[622,745],[668,743],[715,745],[762,747],[808,735],[855,730],[878,705],[925,680],[950,655],[996,590],[1043,550],[1090,505],[1136,465],[1183,425],[1229,390],[1254,378],[1300,378],[1347,405],[1394,430],[1442,468],[1488,483],[1510,500],[1535,512],[1568,505]].map(z7)
    .concat([[89,1015],[132,985],[174,965],[194,935],[215,900],[236,875],[258,868],[279,850],[299,825],[320,815],[362,785],[404,755],[426,745],[467,738],[488,742],[510,760],[530,785],[551,825],[573,850],[593,880],[614,915],[635,970],[657,1010],[699,1050],[741,1090],[762,1110],[783,1145],[825,1180],[867,1200],[909,1222],[929,1225],[970,1225],[1000,1260]].map(z8));
const ma60 = [[12,860],[105,860],[175,857],[245,847],[316,842],[386,830],[408,832],[457,847],[550,843],[700,843],[705,838],[795,838],[820,846],[865,848],[890,855],[912,855],[945,842],[970,828],[985,828],[1100,790],[1137,768],[1183,730],[1229,687],[1277,657],[1325,648],[1394,635],[1465,622],[1535,605]].map(z7)
    .concat([[89,1080],[132,1055],[174,1040],[194,1020],[215,1002],[279,985],[341,972],[404,950],[446,937],[488,935],[646,935],[700,942],[762,962],[825,980],[887,987],[950,1007],[1012,1025],[1075,1050],[1117,1060],[1235,1062],[1330,1072],[1370,1090],[1412,1112]].map(z8));
const ma120 = [[12,1058],[105,1040],[198,1020],[290,992],[400,970],[500,955],[620,930],[700,915],[780,900],[860,885],[940,865],[985,855],[1180,790],[1254,765],[1300,757],[1394,750],[1465,740],[1535,733]].map(z7)
    .concat([[70,1187],[130,1165],[215,1135],[280,1122],[350,1112],[430,1102],[500,1102],[570,1100],[700,1103],[780,1118],[885,1122],[950,1115],[1090,1098],[1235,1085],[1410,1082]].map(z8));

polyline(ma120, '#a8a8a8', 2.2);
polyline(ma60, '#00d000', 2);
polyline(ma20, '#d000d0', 1.6);
polyline(ma10, '#e0e000', 1.4);
polyline(ma5, '#e4e4e4', 1.4);

// 这一块原图被涂黑了, 5.68 只露出下半截
text(1480, 758, '5.68', '#b0b0b0', 17);
rect(540, 643, 1079, 107, '#000');

polyline([[1620, 658], [1633, 658]], '#d000d0', 2);
polyline([[1633, 658], [1663, 655]], '#2020f0', 2);
text(951, 279, '7.84 - 7.42', '#c0c0c0', 17);
rect(941, 274, 6, 1, '#e0e0e0');
text(953, 110, '8.71', '#c0c0c0', 17);
polyline([[933, 100], [938, 98], [950, 105]], '#c0c0c0', 1.2);
parts.push('<polygon points="544,763 540,768 548,768" fill="#e02020"/>');
text(544, 780, 'S', '#e02020', 17, 'middle');
rect(921, 760, 19, 19, '#8a1010');
rect(946, 760, 20, 19, '#9a5a10');
rect(1436, 760, 19, 19, '#1a4a8a');
text(930.5, 775, '涨', '#e8e8e8', 16, 'middle');
text(956, 775, '榜', '#e8e8e8', 16, 'middle');
text(1445.5, 775, '财', '#e8e8e8', 16, 'middle');

/* ---------- 副图 ---------- */
const subY = v => 1075 - v * 690;
[0.3, 0.2].forEach(v => dotted(1, 1710, subY(v)));
dotted(1676, 1710, subY(0.1));
dotted(1676, 1710, subY(0));
dotted(1, 1710, subY(-0.1));

const GREEN = '#003300';
const PURPLE = '#880060';
[[3, 54, GREEN], [54, 73, PURPLE], [73, 93, GREEN], [93, 215, PURPLE], [215, 312, GREEN], [312, 707, PURPLE], [707, 838, GREEN]].forEach(b => {
    rect(b[0], 1000, b[1] - b[0], 75, b[2]);
});
parts.push(`<polygon points="838,1000 902,1000 929,943 986,942 986,1075 838,1075" fill="${PURPLE}"/>`);
rect(986, 942, 32, 133, GREEN);
rect(1018, 942, 20, 133, PURPLE);
rect(1038, 942, 636, 133, GREEN);

// 蓝带压在柱子下面
const blue1 = [[1215,568],[1250,585],[1300,650],[1350,700],[1400,790],[1460,855],[1480,860]].map(z9);
const blue1b = [[1215,570],[1240,640],[1280,730],[1320,830],[1350,880],[1400,930],[1450,945],[1478,880]].map(z9);
band(blue1, blue1b, '#0000b0');
band([[240,558],[300,590],[350,640],[400,700],[440,770],[495,885],[550,1000],[600,1090],[650,1190],[700,1270],[755,1350],[800,1390],[850,1410],[940,1418]].map(z10),
    [[240,570],[260,620],[300,670],[340,720],[380,800],[430,890],[480,970],[520,1080],[570,1180],[620,1290],[660,1360],[700,1440],[750,1480],[775,1480],[810,1460],[860,1430],[940,1418]].map(z10), '#0000b0');

// 柱线高度: 0-66 来自左边截图, 67 以后来自右边截图
const lineA = [1097,1060,1030,1000,945,878,878,825,770,715,680,665,635,622,620,625,650,695,720,755,790,812,822,848,765,730,715,713,722,740,733,722,733,700,693,720,700,645,632,625,583,537,537,583,520,488,463,482,490,490,497,520,545,590,635,770,880,950,1000,1030,1050,1050,1050,1020,990,960,820];
const lineB = [755,545,465,400,300,97,92,220,325,455,560,680,715,750,795,835,885,945,995,1045,1125,1185,1235,1243,1243,1237,1285,1298,1297,1335,1365,1403,1403,1380,1355,1315,1260,1205,1170,1140,1120,1118,1117,1105,1078,1125,1180,1192,1193,1188,1160,1105,1050,1005,975,948,930,900,875,853,850,848,850];
const lineY = lineA.concat(lineB).map(v => v / 3 + 780);
const barColors = 'ggggg--yyyyyyyyttttttttt'
    .concat('yyyyttyytyytyyyyyyytyyyttytttttt', '-ggggggggg', 'yyyyyyyy', 'ttttttttt', '-', 'g'.repeat(41), '-yyyt');
const redTop = i => (i <= 70 ? 999 : i === 71 ? 970 : 942);

lineY.forEach((y, i) => {
    const c = barColors[i];
    if (!c || c === '-') return;
    const x = Math.round(candleX(i)) - 3;
    if (c === 'g') {
        rect(x, 1075, 7, Math.max(y - 1075, 0), '#00f000');
        return;
    }
    const fill = c === 'y' ? '#ffff00' : '#00b4b4';
    const top = redTop(i);
    if (y < top) {
        rect(x, y, 8, top - y, '#cc00aa');
        rect(x, top, 7, 1075 - top, fill);
    } else {
        rect(x, y, 7, 1075 - y, fill);
    }
});

// 黄带
const Y = '#ffff00';
band([[10,1215],[68,1222]].map(z9), [[10,1262],[68,1224]].map(z9), '#0000b0');
band([[68,1222],[100,1190],[125,1150],[150,1145],[180,1100],[205,1050],[235,995],[262,960],[285,930],[320,895],[350,880],[400,880],[440,900],[480,915],[520,925]].map(z9),
    [[68,1225],[110,1212],[170,1185],[210,1150],[245,1105],[290,1050],[340,990],[390,950],[440,935],[520,928]].map(z9), Y);
band([[525,925],[545,880],[600,860],[630,838],[660,835],[700,820],[760,790],[800,785],[850,740],[900,690],[940,650],[1030,640]].map(z9),
    [[525,928],[580,905],[640,880],[670,865],[720,850],[800,825],[860,795],[900,770],[950,730],[1000,700],[1030,665]].map(z9), Y);
band([[1180,545],[1210,570]].map(z9), [[1180,550],[1210,572]].map(z9), Y);
band([[0,885],[20,800],[60,710],[100,600],[130,500],[180,490],[225,530],[240,560]].map(z10),
    [[0,886],[20,850],[50,830],[100,770],[130,690],[160,600],[200,565],[240,565]].map(z10), Y);
band([[942,1418],[965,1400],[972,1412]].map(z10), [[942,1418],[972,1414]].map(z10), Y);
band([[972,1412],[1040,1432],[1095,1438]].map(z10), [[972,1412],[1020,1458],[1060,1462],[1095,1438]].map(z10), '#0000b0');
band([[1095,1438],[1160,1345],[1285,1185],[1345,1140]].map(z10), [[1095,1440],[1160,1400],[1220,1350],[1345,1238]].map(z10), Y);

polyline(lineY.map((y, i) => [candleX(i), y]), '#eccaa8', 2.6);
polyline([[6, 999], [901, 999], [911, 993], [929, 943], [950, 942], [1665, 942]], '#f00000', 3.5);

text(326, 994, '妖来了', '#0090d8', 19);
text(586, 994, '妖来了', '#0090d8', 19);
polyline([[316, 982], [330, 976]], '#e8e800', 1.5);
polyline([[576, 982], [584, 976]], '#e8e800', 1.5);

/* ---------- 右侧坐标 ---------- */
const axisRed = '#b00000';
rect(0, 780, 1787, 2, axisRed);
rect(1710, 66, 2, 1216, axisRed);
rect(1785, 782, 2, 500, axisRed);
rect(0, 1281, 1787, 2, axisRed);

const priceLabels = ['8.60','8.40','8.20','8.00','7.80','7.60','7.40','7.20','7.00','6.80','6.60','6.40','6.20','6.00','5.80'];
priceLabels.forEach((label, n) => {
    const y = 122 + n * 43;
    rect(1711, y - 1, 8, 2, axisRed);
    rect(1711, y + 21, 5, 1, axisRed);
    text(1779, y + 7, label, '#d82828', 18, 'end');
});
[['0.30', 0.3], ['0.20', 0.2], ['0.10', 0.1], ['0.00', 0], ['-0.10', -0.1]].forEach(a => {
    const y = subY(a[1]);
    rect(1711, y - 1, 8, 2, axisRed);
    text(1779, y + 7, a[0], '#d82828', 18, 'end');
});
[904, 973, 1041, 1110].forEach(y => rect(1711, y, 4, 1, axisRed));

/* ---------- 时间轴 ---------- */
rect(610, 1283, 117, 22, '#000080');
text(7, 1300, '2022年', '#e02020', 17);
text(161, 1300, '6', '#e02020', 17);
text(431, 1300, '7', '#e02020', 17);
text(613, 1300, '2022/07/21/四', '#c8c8e8', 17);
text(996, 1300, '9', '#e02020', 17);
[160, 430, 995].forEach(x => rect(x, 1283, 1, 22, axisRed));
[227, 295, 362, 497, 565, 772, 848, 917, 1130, 1197, 1265, 1315, 1368, 1420, 1470].forEach(x => rect(x, 1283, 1, 5, axisRed));

svg.innerHTML = parts.join('');
```
